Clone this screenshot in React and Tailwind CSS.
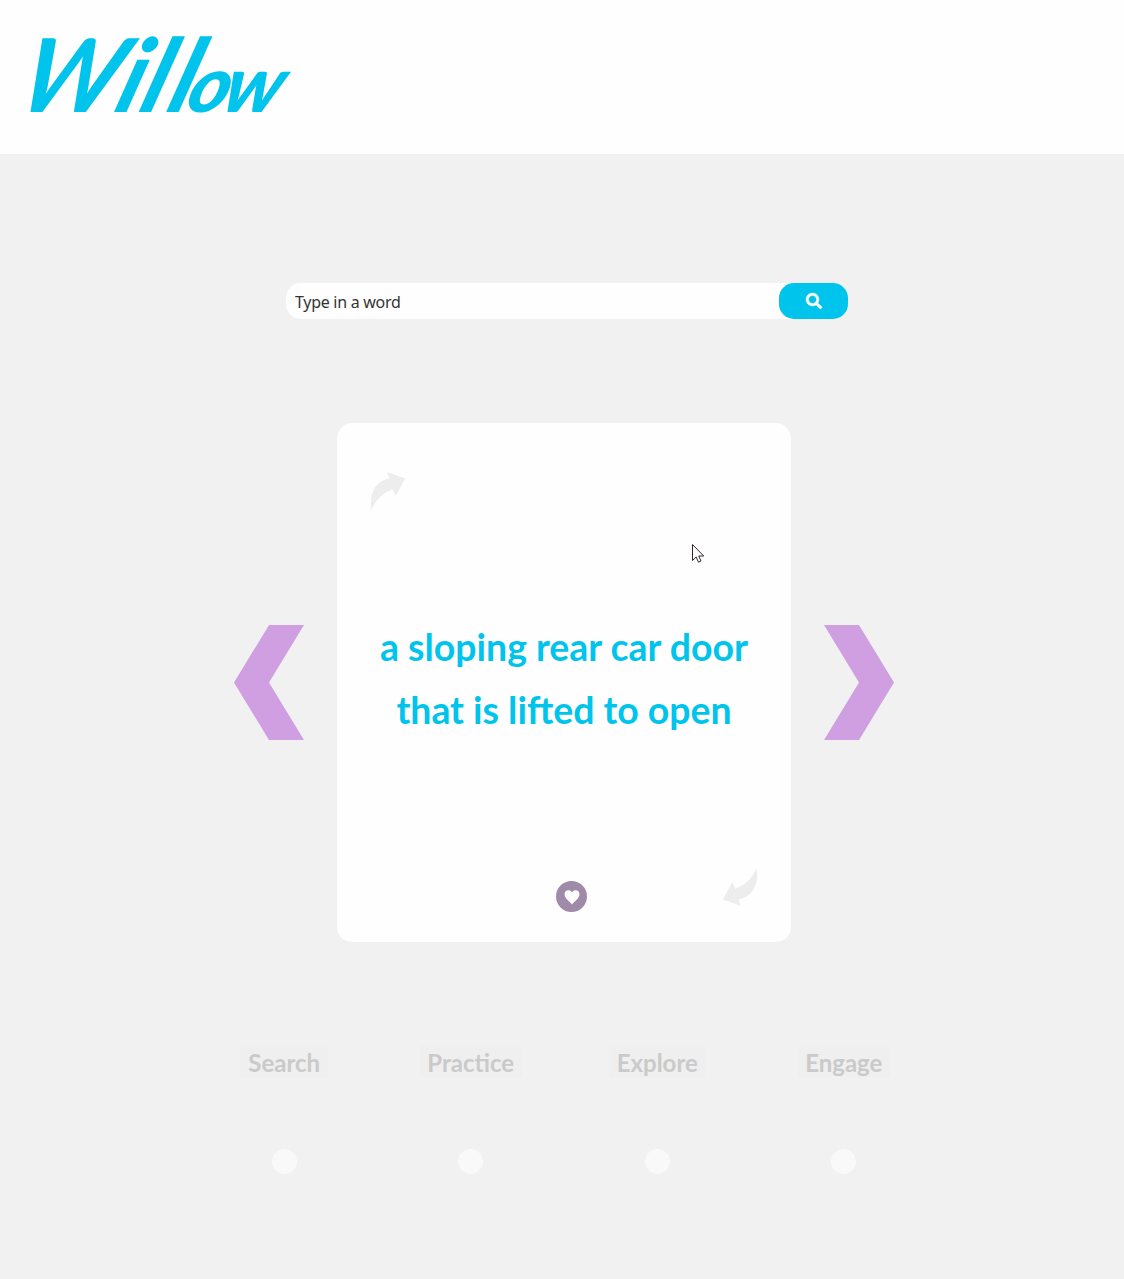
const steps = [
  { label: 'Search', box: 'w-[88px]' },
  { label: 'Practice', box: 'w-[102px]' },
  { label: 'Explore', box: 'w-[96px]' },
  { label: 'Engage', box: 'w-[92px]' },
];

function Chevron({ className = '' }) {
  return (
    <svg viewBox="0 0 70 115" className={`h-[115px] w-[70px] ${className}`} fill="#cf9fe2">
      <path d="M35 0H70L35 57.5L70 115H35L0 57.5Z" />
    </svg>
  );
}

function TurnArrow({ className = '' }) {
  return (
    <svg viewBox="0 0 36 40" className={`h-10 w-9 ${className}`} fill="#ededed">
      <path d="M17 .9L35.200 7.400L25.700 24.700L22.700 18.200C14 21.500 6 28 1.300 38.800C-1 23 5 10 19.500 7.500Z" />
    </svg>
  );
}

export default function App() {
  return (
    <div className="relative h-[1279px] w-[1124px] overflow-hidden bg-[#f1f1f1] font-['Lato',sans-serif]">
      <header className="h-[154px] bg-[#fefefe] pl-[24px] pt-[20px]">
        <h1 className="w-max -skew-x-[18deg] text-[102px] font-bold italic leading-[106px] tracking-[-5px] text-[#00c4eb]">
          W<span className="ml-[5px]">i</span><span className="ml-[5px]">l</span><span className="ml-[8px]">l</span><span className="text-[78px] font-black">ow</span>
        </h1>
      </header>

      <main>
        <form className="ml-[286px] mt-[129px] flex h-9 w-[562px] rounded-[15px] bg-[#fefefe]" onSubmit={(e) => e.preventDefault()}>
          <input
            aria-label="Word"
            placeholder="Type in a word"
            className="min-w-0 flex-1 bg-transparent pl-[9px] pt-[2px] font-['Noto_Sans',sans-serif] text-base tracking-[-0.28px] outline-none placeholder:text-[#333333]"
          />
          <button aria-label="Search" className="flex w-[69px] items-center justify-center rounded-[15px] bg-[#00c4eb]">
            <svg viewBox="0 0 512 512" className="h-4 w-4 overflow-visible" fill="#fefefe" stroke="#fefefe" strokeWidth="12">
              <path d="M505 442.700 405.300 343c-4.500-4.500-10.600-7-17-7H372c27.600-35.300 44-79.700 44-128C416 93.100 322.900 0 208 0S0 93.100 0 208s93.100 208 208 208c48.300 0 92.700-16.400 128-44v16.300c0 6.400 2.500 12.500 7 17l99.700 99.700c9.400 9.400 24.600 9.400 33.900 0l28.300-28.300c9.400-9.400 9.400-24.600.1-34zM208 336c-70.700 0-128-57.200-128-128 0-70.700 57.200-128 128-128 70.700 0 128 57.200 128 128 0 70.700-57.200 128-128 128z" />
            </svg>
          </button>
        </form>

        <section className="ml-[234px] mt-[104px] flex w-[660px] items-center justify-between">
          <button aria-label="Previous"><Chevron /></button>
          <article className="flex h-[519px] w-[454px] flex-col rounded-[15px] bg-[#fefefe]">
            <TurnArrow className="ml-[33px] mt-12 shrink-0" />
            <p className="mt-[104px] h-[126px] whitespace-nowrap text-center text-[37.4px] font-bold leading-[63px] text-[#00c4eb]">
              a sloping rear car door
              <br />
              that is lifted to open
            </p>
            <div className="mt-[126px] flex justify-between pl-[219px] pr-[33px]">
              <button aria-label="Favourite" className="mt-[14px] flex h-[31px] w-[31px] items-center justify-center rounded-full bg-[#9f8aa9]">
                <svg viewBox="0 0 16 16" className="h-4 w-4" fill="#fefefe">
                  <path d="M8 15.500C5.500 12.200 .5 9.500 .5 5C.5 .8 5.800 -.2 8 3.200C10.200 -.2 15.500 .8 15.500 5C15.500 9.500 10.500 12.200 8 15.500Z" />
                </svg>
              </button>
              <TurnArrow className="rotate-180" />
            </div>
          </article>
          <button aria-label="Next"><Chevron className="rotate-180" /></button>
        </section>

        <nav className="ml-[191px] mt-[104px] grid w-[746px] grid-cols-4">
          {steps.map((s) => (
            <div key={s.label} className="flex flex-col items-center">
              <button className={`flex h-[31px] items-center justify-center whitespace-nowrap bg-[#efefef] pt-[3px] text-[24px] font-bold leading-[28px] text-[#cacaca] ${s.box}`}>
                {s.label}
              </button>
              <span className="mt-[72px] h-[25px] w-[25px] rounded-full bg-[#f9f9f9]" />
            </div>
          ))}
        </nav>
      </main>

      <svg viewBox="0 0 14 21" className="pointer-events-none absolute left-[691px] top-[543px] h-[21px] w-[14px]" fill="#fff" stroke="#30252d" strokeWidth="1">
        <path d="M1.500 1.500V17.500L5.200 14L7.500 19.200L10 18L7.700 13H12.700Z" />
      </svg>
    </div>
  );
}
